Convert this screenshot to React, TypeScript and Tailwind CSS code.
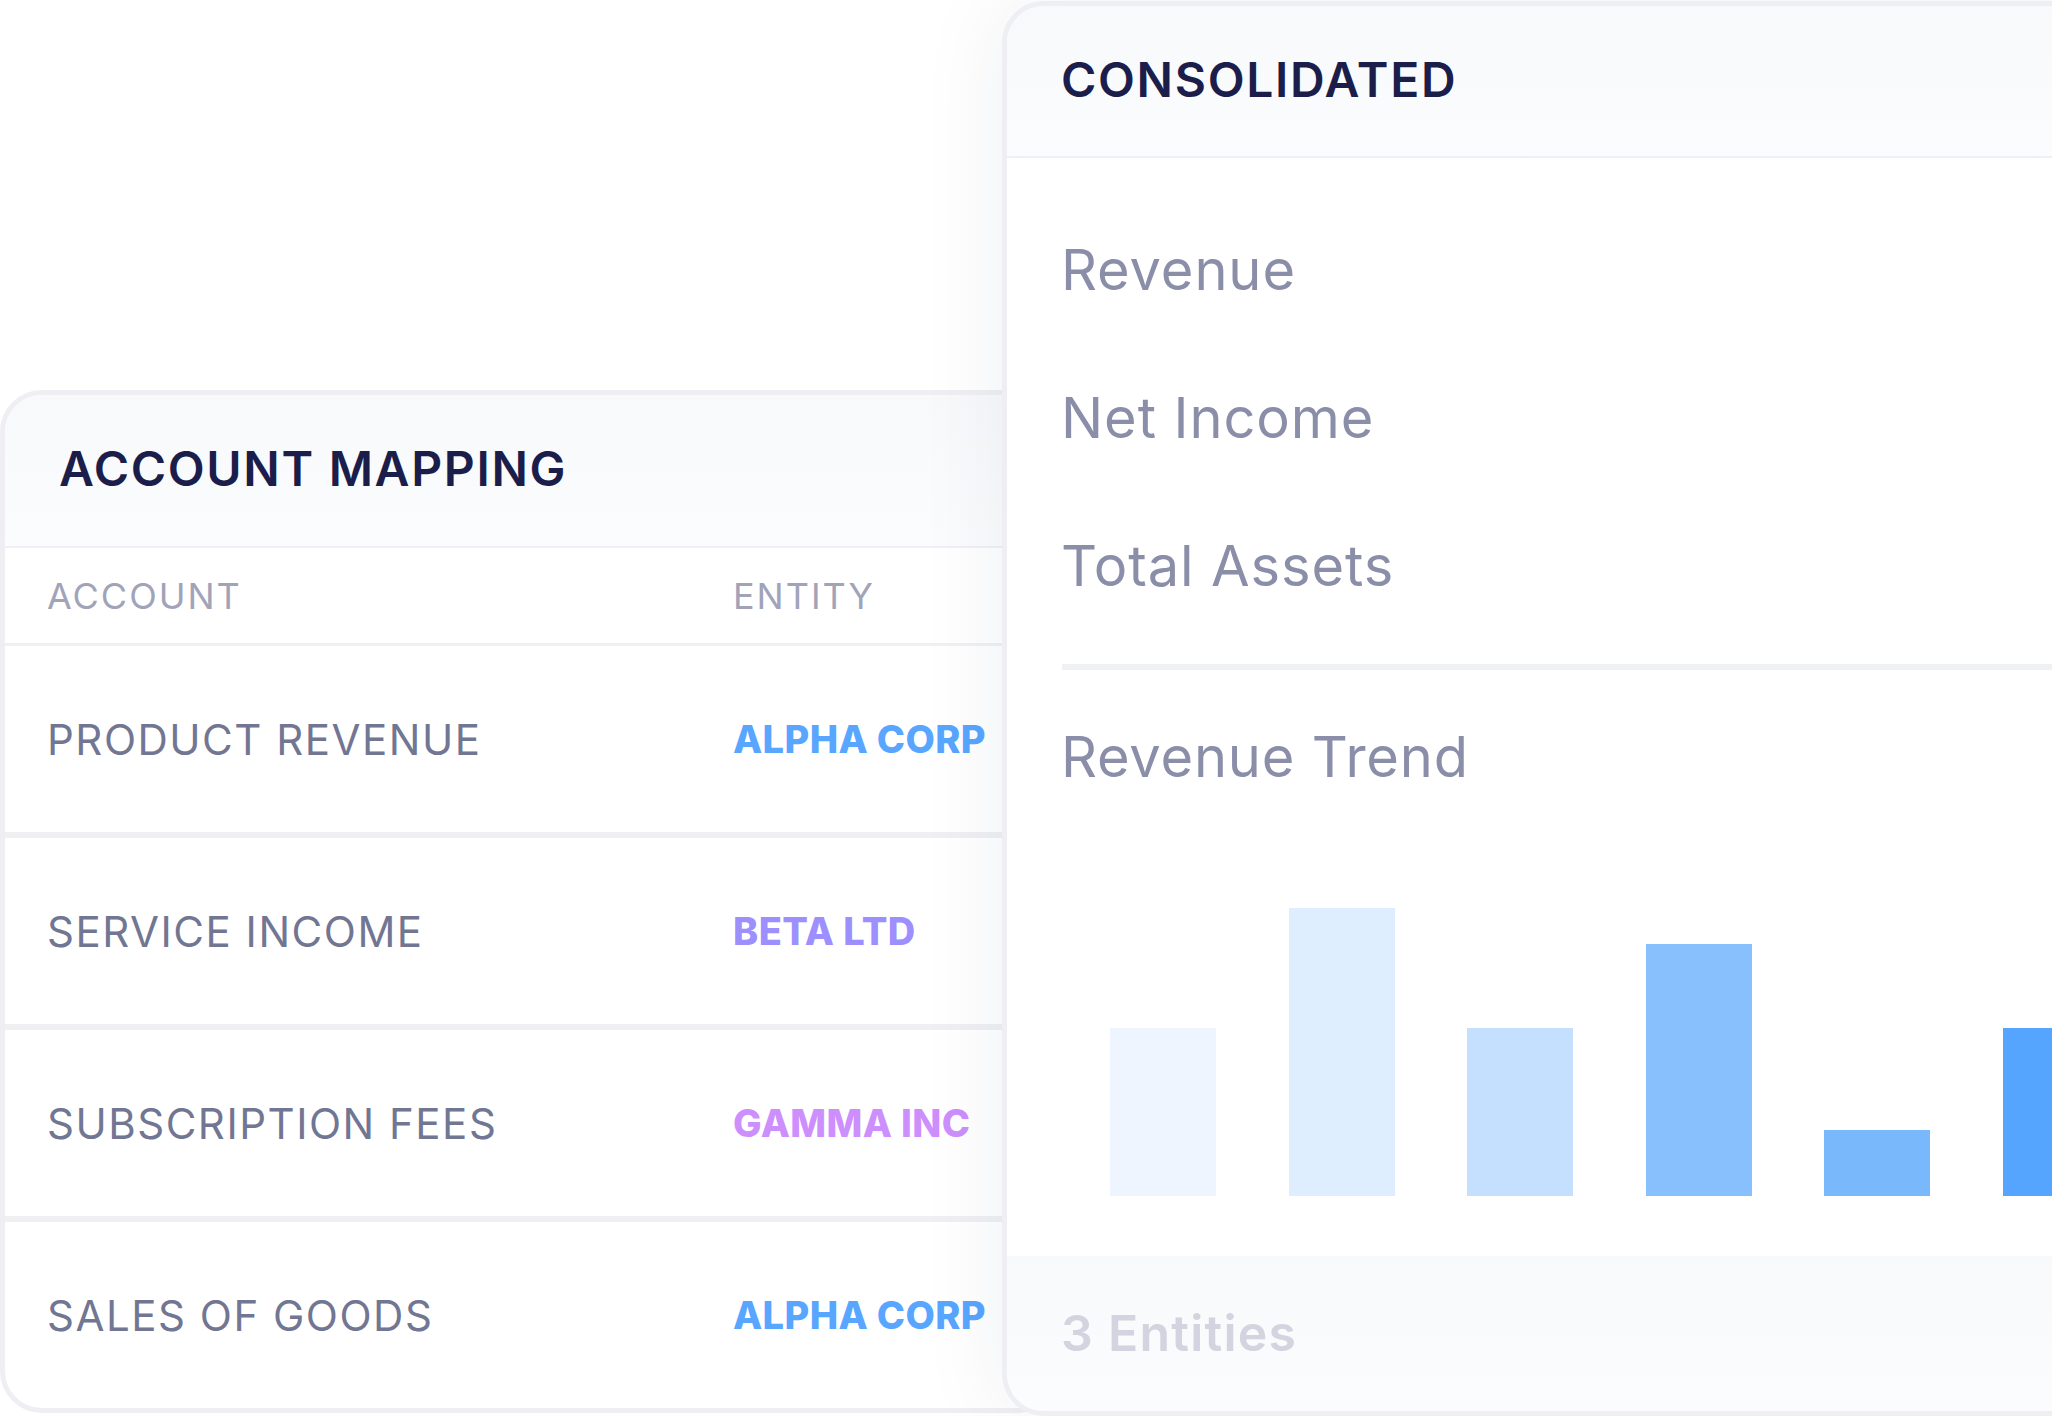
const rows = [
  { account: 'PRODUCT REVENUE', entity: 'ALPHA CORP', color: 'text-[#58a6ff]' },
  { account: 'SERVICE INCOME', entity: 'BETA LTD', color: 'text-[#9d8ffd]' },
  { account: 'SUBSCRIPTION FEES', entity: 'GAMMA INC', color: 'text-[#cc8ffd]' },
  { account: 'SALES OF GOODS', entity: 'ALPHA CORP', color: 'text-[#58a6ff]' },
];

const metrics = ['Revenue', 'Net Income', 'Total Assets'];

const bars = [
  { h: 168, color: 'bg-[#eef5ff]' },
  { h: 288, color: 'bg-[#dfeeff]' },
  { h: 168, color: 'bg-[#c5e0fe]' },
  { h: 252, color: 'bg-[#88c0fd]' },
  { h: 66, color: 'bg-[#7ab8fc]' },
  { h: 168, color: 'bg-[#55a4fd]' },
];

function AccountMapping() {
  return (
    <div className="mt-[390px] w-[1060px] shrink-0 overflow-hidden rounded-[42px] border-[5px] border-[#efeff3] bg-white">
      <div className="flex h-[153px] items-center border-b-2 border-[#eef0f5] bg-linear-to-b from-[#f8f9fb] to-[#fbfcfd] pb-[4px] pl-[54px]">
        <h2 className="text-[48px] font-semibold tracking-[0.035em] text-[#1b1e4b]">ACCOUNT MAPPING</h2>
      </div>
      <div className="grid h-[98px] grid-cols-[686px_1fr] items-center border-b-[3px] border-[#eff0f4] pl-[42px] text-[36px] tracking-[0.055em] text-[#a1a4b9]">
        <span>ACCOUNT</span>
        <span>ENTITY</span>
      </div>
      {rows.map((row, i) => (
        <div
          key={row.account + i}
          className={`box-content grid h-[186px] grid-cols-[686px_1fr] items-center pl-[42px] ${
            i < rows.length - 1 ? 'border-b-[6px] border-[#f0f0f3]' : ''
          }`}
        >
          <span className="text-[42px] tracking-[0.036em] text-[#717693]">{row.account}</span>
          <span className={`text-[38px] font-extrabold tracking-[0.01em] ${row.color}`}>{row.entity}</span>
        </div>
      ))}
    </div>
  );
}

function Consolidated() {
  return (
    <div className="relative z-10 mt-px -ml-[58px] w-[1200px] shrink-0 overflow-hidden rounded-[42px] border-[5px] border-[#efeff3] bg-white shadow-[0_0_90px_rgba(30,40,90,0.07)]">
      <div className="flex h-[152px] items-center border-b-2 border-[#eef0f5] bg-linear-to-b from-[#f8f9fb] to-[#fbfcfd] pb-[2px] pl-[54px]">
        <h2 className="text-[48px] font-semibold tracking-[0.035em] text-[#1b1e4b]">CONSOLIDATED</h2>
      </div>
      <div className="pt-[38px]">
        {metrics.map((m) => (
          <div key={m} className="flex h-[148px] items-center pl-[54px] text-[56px] tracking-[0.016em] text-[#8b8ea8]">
            {m}
          </div>
        ))}
      </div>
      <div className="mt-[24px] ml-[55px] h-[6px] bg-[#f0f1f4]" />
      <div className="flex h-[174px] items-center pl-[54px] text-[56px] tracking-[0.014em] text-[#8b8ea8]">
        Revenue Trend
      </div>
      <div className="flex h-[352px] items-end gap-[72.6px] pl-[103px]">
        {bars.map((b, i) => (
          <div key={i} className={`w-[106px] shrink-0 ${b.color}`} style={{ height: b.h }} />
        ))}
      </div>
      <div className="mt-[60px] flex h-[155px] items-center bg-linear-to-b from-[#f8f9fb] to-[#fbfcfd] pl-[54px]">
        <span className="text-[50px] font-semibold tracking-[0.025em] text-[#d3d4df]">3 Entities</span>
      </div>
    </div>
  );
}

export default function App() {
  return (
    <div className="flex h-[1416px] w-[2052px] items-start overflow-hidden bg-white font-['Inter',sans-serif]">
      <AccountMapping />
      <Consolidated />
    </div>
  );
}
